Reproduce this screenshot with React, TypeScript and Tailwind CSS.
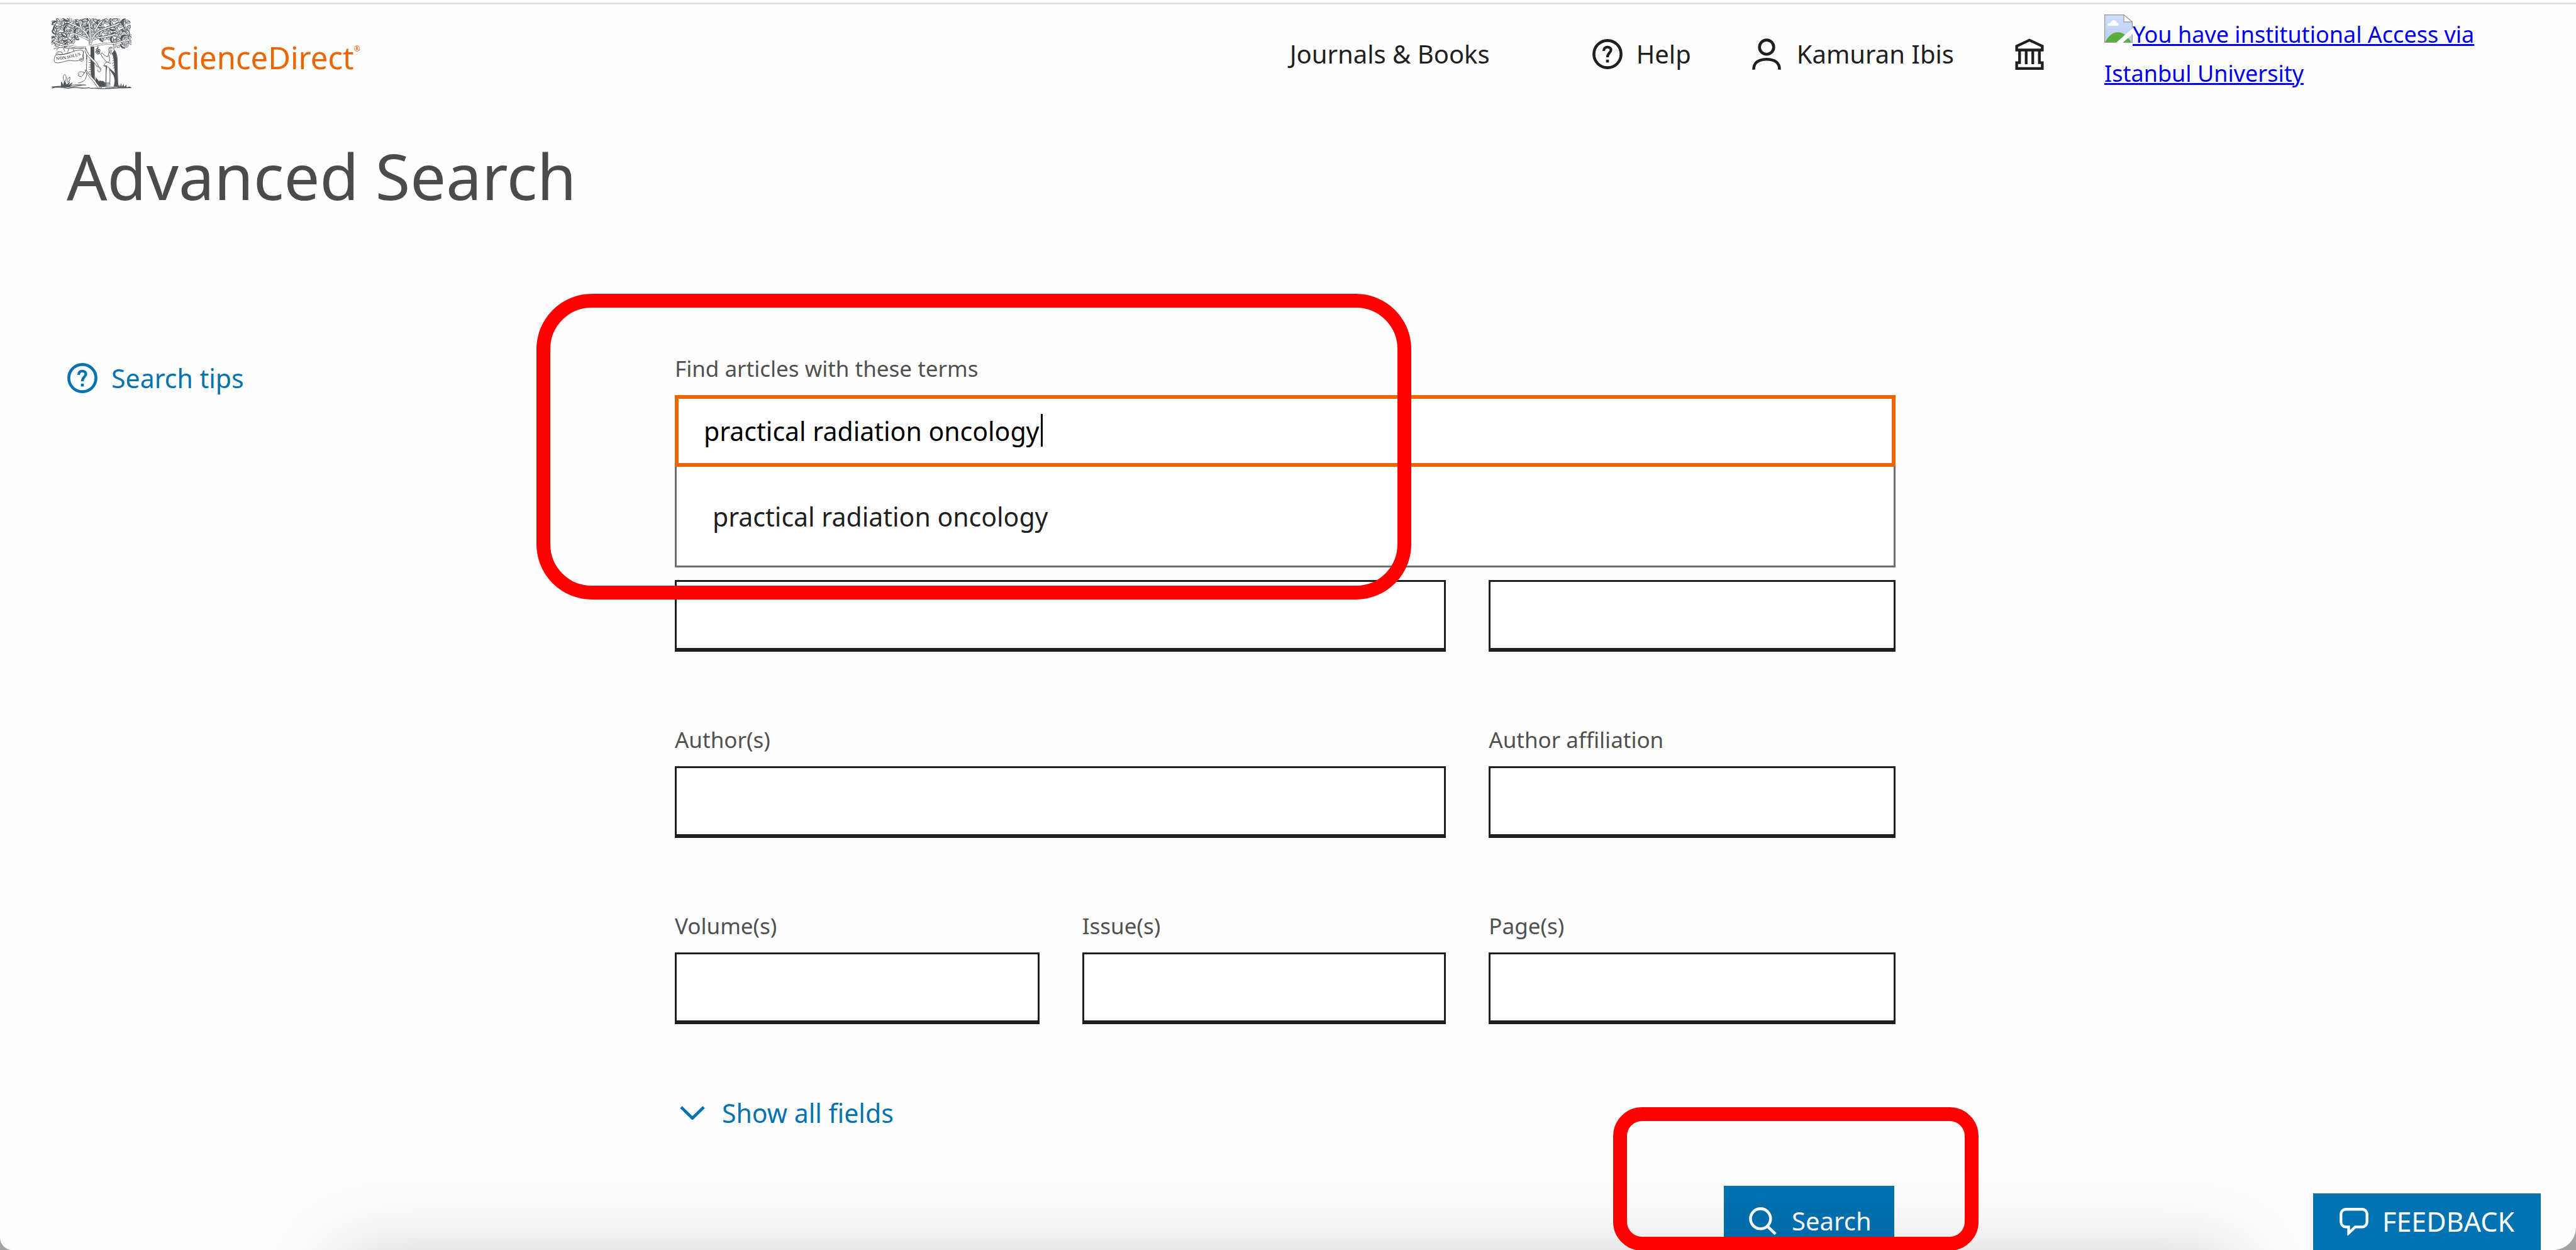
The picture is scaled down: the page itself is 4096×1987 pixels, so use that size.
import { useState } from "react";

const leaves: { x: number; y: number; r: number; s: number; dark: boolean }[] = [];
for (let row = 0; row < 9; row++) {
  for (let col = 0; col < 21; col++) {
    const n = row * 21 + col;
    const x = 34 + col * 20 + Math.sin(n * 12.9) * 6;
    const y = 30 + row * 16 + Math.cos(n * 7.3) * 5;
    if (x > 430) continue;
    if (y > 112 && x > 165 && x < 262) continue;
    if (y > 138 && x > 110 && x < 345) continue;
    if (y > 152 && (x < 40 || x > 415)) continue;
    leaves.push({ x, y, r: (n * 67) % 180, s: 0.8 + ((n * 13) % 5) / 9, dark: n % 3 === 0 });
  }
}

const branches = [
  "M222 165C222 125 212 100 178 74C160 60 140 52 118 44",
  "M224 150C222 110 224 70 214 34",
  "M228 140C236 100 262 84 300 70C330 58 352 58 372 44",
  "M214 130C190 112 160 104 122 92",
  "M236 128C262 112 300 120 350 100",
  "M246 84C256 64 262 50 280 34",
  "M178 76C172 58 168 46 170 32",
  "M214 168C170 178 120 158 82 156C62 152 46 142 34 136",
  "M234 162C280 146 320 150 356 146C380 142 392 136 404 128",
];

function TreeLogo() {
  return (
    <svg viewBox="23 18 412 366" className="h-[113px] w-[127px] shrink-0" fill="none" stroke="#505459" strokeWidth="3" aria-hidden="true">
      {leaves.map((l, i) => (
        <g key={i} transform={`translate(${l.x} ${l.y}) rotate(${l.r}) scale(${l.s})`}>
          <path d="M-13 0C-8 -9 6 -10 13 0C6 9 -8 8 -13 0Z" fill="#fefefe" />
          <path d="M-8 1L7 0" strokeWidth="2" />
          {l.dark && <path d="M-12 1C-6 10 6 9 12 1C4 4 -4 4 -12 1Z" fill="#505459" />}
        </g>
      ))}
      {branches.map((d) => (
        <g key={d} strokeLinecap="round">
          <path d={d} strokeWidth="10" />
          <path d={d} stroke="#fefefe" strokeWidth="6" />
        </g>
      ))}
      {/* trunk */}
      <path d="M200 162C208 200 202 250 202 290C200 330 190 352 150 366L250 376C280 376 268 362 250 340L246 160Z" fill="#fefefe" stroke="none" />
      <path d="M200 172C209 200 203 240 203 288M204 300C203 330 196 344 160 352M196 168C202 190 204 210 203 230" />
      <path d="M224 164L243 164L246 330L254 346L236 330C222 312 228 300 224 270Z" fill="#505459" stroke="none" />
      <path
        d="M216 210H230M215 222H230M216 234H230M214 246H230M216 258H230M214 270H230M216 282H230M214 294H230M216 306H230"
        strokeWidth="3"
      />
      <path d="M198 184C206 216 246 234 258 262" stroke="#fefefe" strokeWidth="9" />
      <path d="M194 184C202 218 244 238 256 266M204 184C212 214 252 230 264 262" />
      <path d="M262 260C268 280 282 282 274 292C266 298 256 290 262 282M256 266C266 270 276 266 278 282" />
      <path d="M196 284C210 318 240 340 262 378L282 378C256 342 230 326 206 290Z" fill="#fefefe" />
      <path d="M160 302C164 292 178 290 192 300C184 304 192 312 182 312C180 322 166 320 160 312C168 312 164 306 160 302ZM192 300L200 290" />
      {/* banner */}
      <path
        d="M46 206C36 220 32 240 42 246C70 254 90 234 126 236C150 242 176 234 188 222L186 186C168 176 140 186 116 196C92 206 70 204 46 206Z"
        fill="#fefefe"
      />
      <path d="M46 206C44 192 66 186 76 194C84 202 72 208 64 204M186 186C192 200 178 210 186 222C192 244 168 244 168 228C176 220 184 226 180 234M52 200C70 214 96 198 120 194" />
      <g fill="#505459" stroke="none" fontFamily="Liberation Serif, serif" fontWeight="bold" fontSize="24">
        <text x="46" y="234" transform="rotate(-6 46 234)">NON</text>
        <text x="104" y="226" fontSize="22" transform="rotate(-14 104 226)">SOLUS</text>
      </g>
      <path d="M34 176C52 166 80 168 100 172C130 176 160 172 190 170M60 170L46 184M84 172L92 190M112 174L106 192M132 176L140 188" />
      {/* grapes */}
      <g strokeWidth="4">
        <circle cx="258" cy="180" r="5" />
        <circle cx="268" cy="184" r="5" />
        <circle cx="256" cy="192" r="5" />
        <circle cx="267" cy="196" r="5" />
        <path d="M262 176V162M262 206V200" />
      </g>
      {/* old man */}
      <path
        d="M318 176C322 162 340 164 346 180C362 196 364 230 362 270L366 376L330 372L302 370L304 300L308 262L292 264C296 250 304 246 312 244C300 238 284 220 276 202L284 196C290 206 302 214 312 216C318 206 320 192 318 176Z"
        fill="#fefefe"
      />
      <path
        d="M346 182C362 196 362 240 362 270L364 372L342 370C352 350 350 320 336 302C324 286 318 276 314 266C326 280 340 290 350 300C342 262 350 226 334 200Z"
        fill="#505459"
        stroke="none"
      />
      <path d="M326 178L322 200M332 180L328 206M320 172L334 172M318 206C322 222 326 240 316 246M312 244L328 250M304 262V372M322 282C328 310 322 340 324 366M292 262L312 270M346 220L338 224M346 232L338 238M346 246L336 250M348 258L338 264M350 270L340 276" />
      {/* ground */}
      <path d="M250 318C256 336 262 328 266 344C276 332 278 346 286 340L300 350V372H270L250 346Z" fill="#505459" stroke="none" />
      <path
        d="M24 378C50 370 84 374 110 380C140 366 180 384 216 376C230 384 250 374 262 380C300 382 340 378 434 376M24 372C60 368 80 366 100 370C130 376 150 366 180 364M110 366C140 358 160 362 200 362M290 352H324M286 362H320M300 378H360"
        strokeWidth="4"
      />
      <path d="M72 372L74 346L84 366L90 338L100 362L116 346L108 366L130 350L116 372Z" fill="#505459" />
      <path
        d="M88 340C78 322 84 308 92 308C102 320 98 334 94 342M104 348C102 334 110 322 118 322C120 336 112 344 106 350"
        fill="#fefefe"
      />
      <path d="M366 376L370 358L376 372L382 352L386 372L394 356L398 372L408 360L410 374L428 370L432 376Z" fill="#505459" stroke="none" />
    </svg>
  );
}

function HelpIcon() {
  return (
    <svg viewBox="0 0 52 52" className="size-12 shrink-0" fill="none" stroke="currentColor" strokeWidth="5" aria-hidden="true">
      <circle cx="26" cy="26" r="23.4" />
      <path d="M19.5 20.5C19.5 16.2 22.3 13.9 26 13.9C29.7 13.9 32 16 32 19C32 23.6 26 24 26 31.5" strokeWidth="4.6" />
      <path d="M26 35.5V40.5" />
    </svg>
  );
}

function PersonIcon() {
  return (
    <svg viewBox="0 0 50 54" className="h-[50px] w-[46px] shrink-0" fill="none" stroke="currentColor" strokeWidth="5" aria-hidden="true">
      <circle cx="25" cy="15" r="12.3" />
      <path d="M2.6 54C2.6 42 11 36 25 36S47.4 42 47.4 54" />
    </svg>
  );
}

function InstitutionIcon() {
  return (
    <svg viewBox="0 0 146 162" className="h-[50px] w-[46px] shrink-0" fill="none" stroke="currentColor" strokeWidth="14" aria-hidden="true">
      <path d="M7 60V40L73 9L139 40V60Z" />
      <path d="M22 60V125H7V155H139V125H124V60M56 60V133M90 60V133" />
    </svg>
  );
}

function MissingImageIcon() {
  return (
    <svg viewBox="0 0 145 145" className="inline-block size-[45px] align-baseline" aria-hidden="true">
      <defs>
        <linearGradient id="sky" x1="0" y1="0" x2="0" y2="1">
          <stop offset="0" stopColor="#cddefc" />
          <stop offset="1" stopColor="#bccdf0" />
        </linearGradient>
      </defs>
      <path d="M2 2H100L143 38V143H2Z" fill="url(#sky)" />
      <path d="M18 58C14 48 22 44 32 44C36 24 60 24 62 42C72 44 76 52 71 58Z" fill="#fff" />
      <path d="M4 143C20 110 44 91 68 91C96 91 120 110 138 143Z" fill="#58ae3a" />
      <path d="M2 2H100L143 38V143H2Z" fill="none" stroke="#9a9a9a" strokeWidth="4" />
      <path d="M100 2V38H143Z" fill="#fefefe" stroke="#9a9a9a" strokeWidth="4" />
      <path d="M60 145L145 70V100L94 145Z" fill="#fefefe" />
    </svg>
  );
}

function SearchIcon() {
  return (
    <svg viewBox="0 0 48 48" className="size-11 shrink-0" fill="none" stroke="currentColor" strokeWidth="5" aria-hidden="true">
      <circle cx="20" cy="20" r="17.4" />
      <path d="M31.5 32.5L46 46.5" />
    </svg>
  );
}

function FeedbackIcon() {
  return (
    <svg viewBox="0 0 49 47" className="h-11 w-[46px] shrink-0" fill="none" stroke="currentColor" strokeWidth="4.6" aria-hidden="true">
      <path d="M10.5 2.4H38.5C43 2.4 46.6 6 46.6 10.5V24C46.6 28.5 43 32.4 38.5 32.4H26.5L15.4 43V32.4H10.5C6 32.4 2.4 28.5 2.4 24V10.5C2.4 6 6 2.4 10.5 2.4Z" />
    </svg>
  );
}

function Field({ id, label, wide }: { id: string; label: string; wide?: boolean }) {
  return (
    <div className={wide ? "col-span-2 flex flex-col" : "flex flex-col"}>
      <label htmlFor={id} className="mb-[17px] text-[35px] leading-[50px] text-[#505050]">
        {label}
      </label>
      <input id={id} type="text" className="h-[114px] w-full border-[3px] border-b-[6px] border-[#1f1f1f] bg-white px-[40px] text-[41px] outline-none" />
    </div>
  );
}

export default function App() {
  const [terms, setTerms] = useState("practical radiation oncology");

  return (
    <div className="h-screen overflow-hidden bg-[#a3a3a3] font-['Noto_Sans',sans-serif] text-[#1f1f1f]">
      <div className="relative h-full overflow-hidden rounded-bl-[20px] rounded-br-[36px] bg-[#fefefe] pt-1">
        <header className="flex items-center border-t-[3px] border-[#e2e2e2] pt-[16px] pl-[82px]">
          <a href="#" className="flex items-center gap-[45px]">
            <TreeLogo />
            <span className="flex items-start pt-[11px] text-[49px] leading-[60px] text-[#eb6500]">
              ScienceDirect
              <sup className="top-0 pt-[10px] text-[12px] leading-[14px]">®</sup>
            </span>
          </a>
          <nav className="ml-auto flex items-center text-[40px] leading-[60px]">
            <a href="#" className="mr-[163px]">Journals &amp; Books</a>
            <a href="#" className="mr-[97px] flex items-center gap-[22px]">
              <HelpIcon />
              Help
            </a>
            <button type="button" className="mr-[97px] flex items-center gap-[25px]">
              <PersonIcon />
              Kamuran Ibis
            </button>
            <button type="button" aria-label="Institution" className="mr-[96px]">
              <InstitutionIcon />
            </button>
          </nav>
          <a href="#" className="mr-[130px] w-[620px] text-[36px] leading-[62px] text-[#0000ee]">
            <MissingImageIcon />
            <span className="underline decoration-[3px]">You have institutional Access via Istanbul University</span>
          </a>
        </header>

        <h1 className="mt-[71px] pl-[106px] text-[101px] leading-[120px] text-[#4b4b4b]">Advanced Search</h1>

        <main className="mt-[222px] grid grid-cols-[966fr_1941fr_1082fr] pl-[107px]">
          <aside className="pt-[10px]">
            <a href="#" className="inline-flex items-center gap-[22px] text-[41px] leading-[60px] text-[#0272b1]">
              <HelpIcon />
              Search tips
            </a>
          </aside>

          <form onSubmit={(e) => e.preventDefault()}>
            <div className="relative z-10 flex flex-col">
              <label htmlFor="terms" className="mb-[17px] text-[35px] leading-[50px] text-[#505050]">
                Find articles with these terms
              </label>
              <div className="relative">
                <input
                  id="terms"
                  type="text"
                  value={terms}
                  onChange={(e) => setTerms(e.target.value)}
                  className="block h-[114px] w-full border-[6px] border-[#eb6500] bg-white px-[40px] text-[41px] text-black outline-none"
                />
                <span className="absolute top-[30px] left-[582px] h-[52px] w-[3px] bg-black" />
                <ul className="absolute top-full right-0 left-0 border-[3px] border-t-0 border-[#6e6e6e] bg-white">
                  <li>
                    <button type="button" className="flex h-[157px] w-full items-center px-[57px] text-[41px] leading-[60px]">
                      practical radiation oncology
                    </button>
                  </li>
                </ul>
              </div>
              <div className="pointer-events-none absolute -top-[94px] -left-[220px] h-[486px] w-[1391px] rounded-[88px] border-[22px] border-[#ff0000]" />
            </div>

            <div className="mt-[113px] grid grid-cols-[580fr_579fr_647fr] gap-x-[68px] gap-y-[115px]">
              <Field id="journal" label="In this journal or book title" wide />
              <Field id="year" label="Year(s)" />
              <Field id="authors" label="Author(s)" wide />
              <Field id="affiliation" label="Author affiliation" />
              <Field id="volume" label="Volume(s)" />
              <Field id="issue" label="Issue(s)" />
              <Field id="page" label="Page(s)" />
            </div>

            <button type="button" className="mt-[111px] ml-[8px] flex items-center gap-[27px] text-[41px] leading-[60px] text-[#0272b1]">
              <svg viewBox="0 0 42 24" className="w-10" fill="none" stroke="currentColor" strokeWidth="5" aria-hidden="true">
                <path d="M2 2L21 20.5L40 2" />
              </svg>
              Show all fields
            </button>

            <div className="relative mt-[86px] mr-[2px] ml-auto w-[271px]">
              <button type="submit" className="flex h-[111px] w-full items-center gap-[24px] bg-[#0272b1] pl-[40px] text-[40px] leading-[60px] text-white">
                <SearchIcon />
                Search
              </button>
              <div className="pointer-events-none absolute -top-[125px] -left-[176px] z-20 h-[228px] w-[581px] rounded-[46px] border-[22px] border-[#ff0000]" />
            </div>
          </form>
        </main>

        {/* shade cast from below the window */}
        <div className="pointer-events-none absolute top-full right-[529px] left-[529px] h-[400px] shadow-[0_0_120px_rgba(0,0,0,0.17)]" />

        <button type="button" className="absolute right-[56px] bottom-0 flex h-[90px] items-center gap-[22px] bg-[#0272b1] px-[42px] text-[43px] leading-[60px] text-white">
          <FeedbackIcon />
          FEEDBACK
        </button>
      </div>
    </div>
  );
}
